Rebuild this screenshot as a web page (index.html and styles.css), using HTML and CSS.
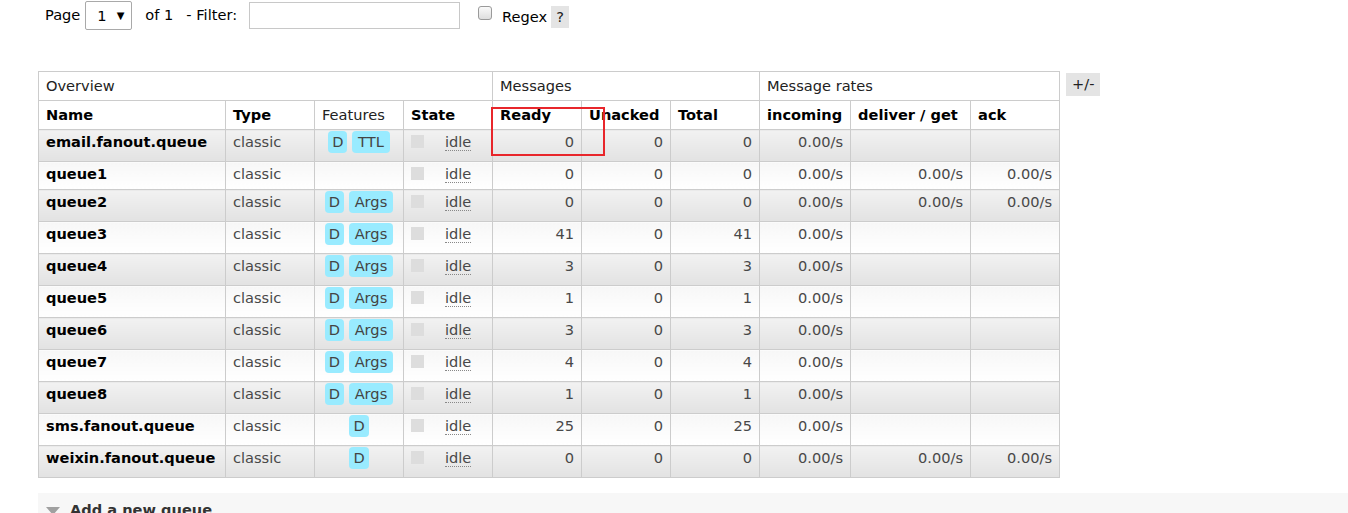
FILE: index.html
```html
<!DOCTYPE html>
<html>
<head>
<meta charset="utf-8">
<link rel="stylesheet" href="styles.css">
</head>
<body>
<div class="filter-bar">
  <span class="lbl">Page</span>
  <span class="select"><span>1</span><span class="arrow">▼</span></span>
  <span class="lbl of">of 1</span>
  <span class="lbl">- Filter:</span>
  <span class="input"></span>
  <span class="checkbox"></span>
  <span class="lbl regex">Regex</span>
  <span class="help">?</span>
</div>

<div class="main">
  <div class="table-wrap">
    <table class="list">
      <colgroup>
        <col class="c-name"><col class="c-std"><col class="c-std"><col class="c-std">
        <col class="c-std"><col class="c-std"><col class="c-std">
        <col class="c-inc"><col class="c-deliv"><col class="c-std">
      </colgroup>
      <thead>
        <tr class="group">
          <th colspan="4">Overview</th>
          <th colspan="3">Messages</th>
          <th colspan="3">Message rates</th>
        </tr>
        <tr class="cols">
          <th>Name</th><th>Type</th><th class="normal">Features</th><th>State</th>
          <th>Ready</th><th>Unacked</th><th>Total</th>
          <th>incoming</th><th>deliver / get</th><th>ack</th>
        </tr>
      </thead>
      <tbody>
        <tr class="alt1">
          <td class="name">email.fanout.queue</td><td>classic</td>
          <td class="feat"><span class="badge narrow">D</span> <span class="badge">TTL</span></td>
          <td><span class="sq"></span><span class="idle">idle</span></td>
          <td class="r">0</td><td class="r">0</td><td class="r">0</td>
          <td class="r">0.00/s</td><td class="r"></td><td class="r"></td>
        </tr>
        <tr class="alt2">
          <td class="name">queue1</td><td>classic</td>
          <td class="feat"></td>
          <td><span class="sq"></span><span class="idle">idle</span></td>
          <td class="r">0</td><td class="r">0</td><td class="r">0</td>
          <td class="r">0.00/s</td><td class="r">0.00/s</td><td class="r">0.00/s</td>
        </tr>
        <tr class="alt1">
          <td class="name">queue2</td><td>classic</td>
          <td class="feat"><span class="badge narrow">D</span> <span class="badge">Args</span></td>
          <td><span class="sq"></span><span class="idle">idle</span></td>
          <td class="r">0</td><td class="r">0</td><td class="r">0</td>
          <td class="r">0.00/s</td><td class="r">0.00/s</td><td class="r">0.00/s</td>
        </tr>
        <tr class="alt2">
          <td class="name">queue3</td><td>classic</td>
          <td class="feat"><span class="badge narrow">D</span> <span class="badge">Args</span></td>
          <td><span class="sq"></span><span class="idle">idle</span></td>
          <td class="r">41</td><td class="r">0</td><td class="r">41</td>
          <td class="r">0.00/s</td><td class="r"></td><td class="r"></td>
        </tr>
        <tr class="alt1">
          <td class="name">queue4</td><td>classic</td>
          <td class="feat"><span class="badge narrow">D</span> <span class="badge">Args</span></td>
          <td><span class="sq"></span><span class="idle">idle</span></td>
          <td class="r">3</td><td class="r">0</td><td class="r">3</td>
          <td class="r">0.00/s</td><td class="r"></td><td class="r"></td>
        </tr>
        <tr class="alt2">
          <td class="name">queue5</td><td>classic</td>
          <td class="feat"><span class="badge narrow">D</span> <span class="badge">Args</span></td>
          <td><span class="sq"></span><span class="idle">idle</span></td>
          <td class="r">1</td><td class="r">0</td><td class="r">1</td>
          <td class="r">0.00/s</td><td class="r"></td><td class="r"></td>
        </tr>
        <tr class="alt1">
          <td class="name">queue6</td><td>classic</td>
          <td class="feat"><span class="badge narrow">D</span> <span class="badge">Args</span></td>
          <td><span class="sq"></span><span class="idle">idle</span></td>
          <td class="r">3</td><td class="r">0</td><td class="r">3</td>
          <td class="r">0.00/s</td><td class="r"></td><td class="r"></td>
        </tr>
        <tr class="alt2">
          <td class="name">queue7</td><td>classic</td>
          <td class="feat"><span class="badge narrow">D</span> <span class="badge">Args</span></td>
          <td><span class="sq"></span><span class="idle">idle</span></td>
          <td class="r">4</td><td class="r">0</td><td class="r">4</td>
          <td class="r">0.00/s</td><td class="r"></td><td class="r"></td>
        </tr>
        <tr class="alt1">
          <td class="name">queue8</td><td>classic</td>
          <td class="feat"><span class="badge narrow">D</span> <span class="badge">Args</span></td>
          <td><span class="sq"></span><span class="idle">idle</span></td>
          <td class="r">1</td><td class="r">0</td><td class="r">1</td>
          <td class="r">0.00/s</td><td class="r"></td><td class="r"></td>
        </tr>
        <tr class="alt2">
          <td class="name">sms.fanout.queue</td><td>classic</td>
          <td class="feat"><span class="badge narrow">D</span></td>
          <td><span class="sq"></span><span class="idle">idle</span></td>
          <td class="r">25</td><td class="r">0</td><td class="r">25</td>
          <td class="r">0.00/s</td><td class="r"></td><td class="r"></td>
        </tr>
        <tr class="alt1">
          <td class="name">weixin.fanout.queue</td><td>classic</td>
          <td class="feat"><span class="badge narrow">D</span></td>
          <td><span class="sq"></span><span class="idle">idle</span></td>
          <td class="r">0</td><td class="r">0</td><td class="r">0</td>
          <td class="r">0.00/s</td><td class="r">0.00/s</td><td class="r">0.00/s</td>
        </tr>
      </tbody>
    </table>
    <span class="toggle">+/-</span>
    <div class="highlight"></div>
  </div>

  <div class="section">
    <span class="tri"></span><span class="section-title">Add a new queue</span>
  </div>
</div>
</body>
</html>
```
FILE: styles.css
```css
html, body {
  margin: 0;
  padding: 0;
  background: #fff;
}
body {
  font-family: "DejaVu Sans", Verdana, sans-serif;
  font-size: 14.6px;
  color: #484848;
  overflow: hidden;
}

/* filter bar */
.filter-bar {
  display: flex;
  align-items: center;
  height: 30px;
  padding-left: 45px;
  color: #000;
}
.filter-bar .lbl { line-height: 18px; }
.select {
  display: inline-flex;
  align-items: center;
  box-sizing: border-box;
  width: 47px;
  height: 29px;
  margin: 0 13px 0 5px;
  padding-left: 11px;
  border: 1px solid #a9a9a9;
  border-radius: 2px;
  background: #fff;
}
.select .arrow {
  font-size: 10px;
  margin-left: 10px;
}
.of { margin-right: 13px; }
.input {
  display: inline-block;
  box-sizing: border-box;
  width: 211px;
  height: 27px;
  margin-left: 12px;
  border: 1px solid #c8c8c8;
  background: #fff;
}
.checkbox {
  display: inline-block;
  box-sizing: border-box;
  width: 14px;
  height: 14px;
  margin: -4px 0 0 18px;
  border: 1px solid #9a9a9a;
  border-radius: 3px;
  background: linear-gradient(#fafafa, #dedede);
}
.regex {
  margin: 4px 0 0 10px;
}
.help {
  display: inline-block;
  box-sizing: border-box;
  width: 18px;
  height: 22px;
  margin: 4px 0 0 4px;
  padding-top: 2px;
  text-align: center;
  background: #e4e4e4;
  color: #222;
}

/* main */
.main {
  margin-top: 41px;
  padding-left: 38px;
}
.table-wrap {
  position: relative;
  display: flex;
  align-items: flex-start;
  gap: 6px;
}
table.list {
  border-collapse: collapse;
  table-layout: fixed;
  width: 1022px;
}
col.c-name { width: 187px; }
col.c-std { width: 89px; }
col.c-inc { width: 91px; }
col.c-deliv { width: 120px; }

table.list th,
table.list td {
  border: 1px solid #cccccc;
  padding: 3px 7px 6px;
  line-height: 18px;
  text-align: left;
  vertical-align: top;
  white-space: nowrap;
  overflow: hidden;
}
table.list th {
  color: #000;
  background: #fff;
  padding: 5px 7px 5px;
}
table.list tr.group th { font-weight: normal; color: #222; }
table.list tr.cols th { font-weight: bold; }
table.list tr.cols th.normal { font-weight: normal; color: #222; }

table.list tr.alt1 td { background: linear-gradient(#f2f2f2, #e2e2e2); }
table.list tr.alt2 td { background: linear-gradient(#f7f7f7, #ffffff); }

table.list td.name { font-weight: bold; color: #000; }
table.list td.r { text-align: right; }
table.list td.feat { text-align: center; padding-left: 4px; padding-right: 4px; }

.badge {
  display: inline-block;
  padding: 3px 6px;
  margin: -2px 0 2px;
  line-height: 16px;
  border-radius: 4px;
  background: #99ebff;
  color: #444;
  vertical-align: baseline;
}
.badge.narrow { padding-left: 4px; padding-right: 4px; }
.sq {
  display: inline-block;
  width: 13px;
  height: 13px;
  margin-right: 21px;
  background: #dddddd;
  vertical-align: -1px;
}
.idle {
  border-bottom: 1px dotted #888;
  line-height: 15px;
}

.toggle {
  display: inline-block;
  margin-top: 2px;
  padding: 1px 6px 3px;
  line-height: 19px;
  background: #e4e4e4;
  color: #222;
}

.highlight {
  position: absolute;
  left: 453px;
  top: 36px;
  width: 114px;
  height: 49px;
  border: 2px solid #e8262b;
  box-sizing: border-box;
}

/* section */
.section {
  margin-top: 15px;
  height: 40px;
  background: #f7f7f7;
  display: flex;
  align-items: flex-start;
  padding: 8px 0 0 8px;
  box-sizing: border-box;
}
.tri {
  width: 0;
  height: 0;
  border-left: 7px solid transparent;
  border-right: 7px solid transparent;
  border-top: 8px solid #a0a0a0;
  margin: 6px 10px 0 0;
}
.section-title {
  font-weight: bold;
  font-size: 14.6px;
  line-height: 18px;
  color: #333;
}
```
